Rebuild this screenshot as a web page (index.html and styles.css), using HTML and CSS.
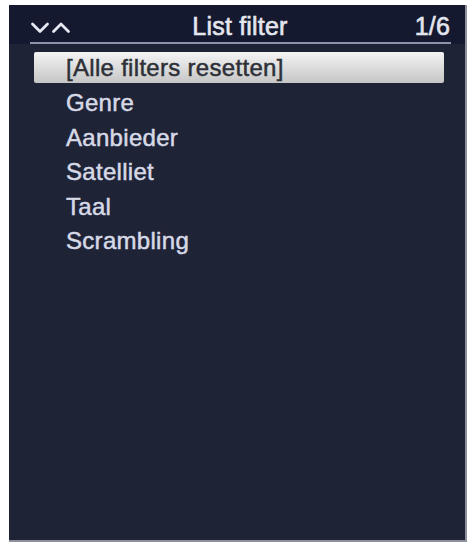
FILE: index.html
```html
<!DOCTYPE html>
<html>
<head>
<meta charset="utf-8">
<link rel="stylesheet" href="styles.css">
</head>
<body>
<div class="panel">
  <div class="header">
    <div class="header-row">
      <div class="arrows">
        <svg width="42" height="12" viewBox="0 0 42 12">
          <polyline points="2.5,2 10,9.5 17.5,2" fill="none" stroke="#e6e8f0" stroke-width="2.8" stroke-linecap="round" stroke-linejoin="round"/>
          <polyline points="23.5,9.5 31,2 38.5,9.5" fill="none" stroke="#e6e8f0" stroke-width="2.8" stroke-linecap="round" stroke-linejoin="round"/>
        </svg>
      </div>
      <div class="title">List filter</div>
      <div class="count">1/6</div>
    </div>
  </div>
  <ul class="list">
    <li class="item selected">[Alle filters resetten]</li>
    <li class="item">Genre</li>
    <li class="item">Aanbieder</li>
    <li class="item">Satelliet</li>
    <li class="item">Taal</li>
    <li class="item">Scrambling</li>
  </ul>
</div>
</body>
</html>
```
FILE: styles.css
```css
html, body {
  margin: 0;
  padding: 0;
  background: #ffffff;
}
body {
  padding: 5px 0 0 9px;
  font-family: "Liberation Sans", Arial, sans-serif;
}
.panel {
  width: 458px;
  height: 537px;
  background: #1f2336;
  box-sizing: border-box;
  border-right: 2px solid #8c909c;
  border-bottom: 2px solid #8c909c;
}
.header {
  background: #141930;
  padding: 0 14px 0 21px;
}
.header-row {
  display: flex;
  align-items: flex-end;
  height: 37px;
  border-bottom: 2px solid #8d93ae;
  color: #e4e6ee;
  font-size: 25px;
  letter-spacing: 0.2px;
  -webkit-text-stroke: 0.6px currentColor;
}
.arrows {
  width: 120px;
  align-self: flex-start;
  padding-top: 17px;
  display: flex;
}
.title {
  flex: 1;
  text-align: center;
  padding-right: 40px;
  line-height: 25px;
  padding-bottom: 3px;
}
.count {
  width: 80px;
  text-align: right;
  line-height: 25px;
  padding-bottom: 3px;
  padding-right: 1px;
}
.list {
  list-style: none;
  margin: 0;
  padding: 8px 0 0 25px;
}
.item {
  height: 34.6px;
  line-height: 34.6px;
  padding-left: 32px;
  font-size: 24px;
  letter-spacing: 0.3px;
  -webkit-text-stroke: 0.5px currentColor;
  color: #d6d9e6;
  width: 378px;
}
.item.selected {
  height: 31px;
  line-height: 31px;
  margin-bottom: 3px;
  color: #2e3038;
  background: linear-gradient(#f4f4f4, #d8d8d8 60%, #c6c6c6);
  border-radius: 2px;
}
```
